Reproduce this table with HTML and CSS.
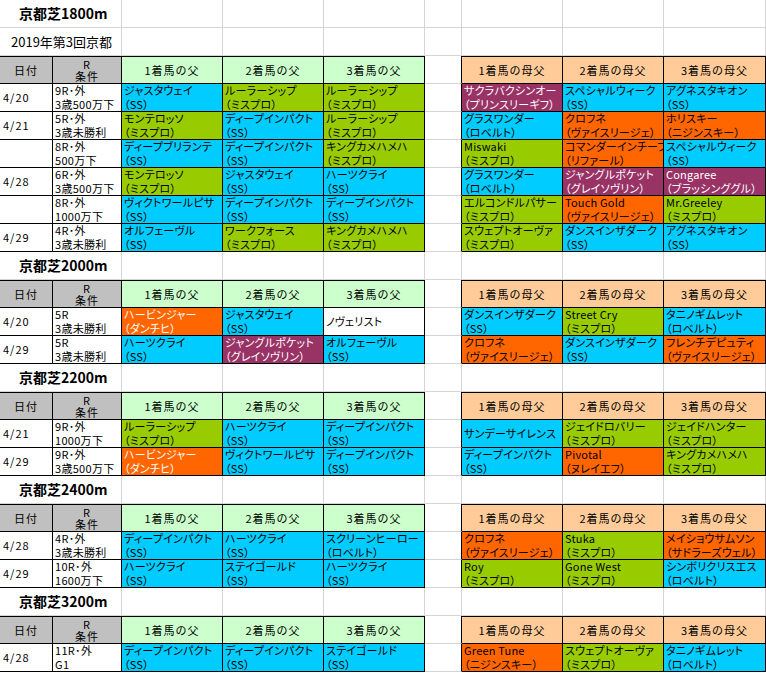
FILE: index.html
```html
<!DOCTYPE html>
<html lang="ja">
<head>
<meta charset="utf-8">
<title>京都芝</title>
<link rel="stylesheet" href="styles.css">
</head>
<body>
<div class="sheet">

  <div class="row"><div class="span2 title">京都芝1800m</div><div></div><div></div><div></div><div></div><div></div><div></div><div></div></div>
  <div class="row"><div class="span2 sub">2019年第3回京都</div><div></div><div></div><div></div><div></div><div></div><div></div><div></div></div>
  <div class="row hd"><div class="h gray mid">日付</div><div class="h gray two">R<br>条件</div><div class="h sire mid">1着馬の父</div><div class="h sire mid">2着馬の父</div><div class="h sire mid">3着馬の父</div><div class="gap"></div><div class="h dam mid">1着馬の母父</div><div class="h dam mid">2着馬の母父</div><div class="h dam mid">3着馬の母父</div></div>
  <div class="row dt"><div class="date">4/20</div><div class="cond">9R･外<br>3歳500万下</div><div class="v blue">ジャスタウェイ<br>（SS）</div><div class="v green">ルーラーシップ<br>（ミスプロ）</div><div class="v green">ルーラーシップ<br>（ミスプロ）</div><div class="gap"></div><div class="v purple">サクラバクシンオー<br>（プリンスリーギフ）</div><div class="v blue">スペシャルウィーク<br>（SS）</div><div class="v blue">アグネスタキオン<br>（SS）</div></div>
  <div class="row dt"><div class="date">4/21</div><div class="cond">5R･外<br>3歳未勝利</div><div class="v green">モンテロッソ<br>（ミスプロ）</div><div class="v blue">ディープインパクト<br>（SS）</div><div class="v green">ルーラーシップ<br>（ミスプロ）</div><div class="gap"></div><div class="v blue">グラスワンダー<br>（ロベルト）</div><div class="v orange">クロフネ<br>（ヴァイスリージェ）</div><div class="v orange">ホリスキー<br>（ニジンスキー）</div></div>
  <div class="row dt"><div class="date"></div><div class="cond">8R･外<br>500万下</div><div class="v blue">ディープブリランテ<br>（SS）</div><div class="v blue">ディープインパクト<br>（SS）</div><div class="v green">キングカメハメハ<br>（ミスプロ）</div><div class="gap"></div><div class="v green">Miswaki<br>（ミスプロ）</div><div class="v orange">コマンダーインチーフ<br>（リファール）</div><div class="v blue">スペシャルウィーク<br>（SS）</div></div>
  <div class="row dt"><div class="date">4/28</div><div class="cond">6R･外<br>3歳500万下</div><div class="v green">モンテロッソ<br>（ミスプロ）</div><div class="v blue">ジャスタウェイ<br>（SS）</div><div class="v blue">ハーツクライ<br>（SS）</div><div class="gap"></div><div class="v blue">グラスワンダー<br>（ロベルト）</div><div class="v purple">ジャングルポケット<br>（グレイソヴリン）</div><div class="v purple">Congaree<br>（ブラッシンググル）</div></div>
  <div class="row dt"><div class="date"></div><div class="cond">8R･外<br>1000万下</div><div class="v blue">ヴィクトワールピサ<br>（SS）</div><div class="v blue">ディープインパクト<br>（SS）</div><div class="v blue">ディープインパクト<br>（SS）</div><div class="gap"></div><div class="v green">エルコンドルパサー<br>（ミスプロ）</div><div class="v orange">Touch Gold<br>（ヴァイスリージェ）</div><div class="v green">Mr.Greeley<br>（ミスプロ）</div></div>
  <div class="row dt"><div class="date">4/29</div><div class="cond">4R･外<br>3歳未勝利</div><div class="v blue">オルフェーヴル<br>（SS）</div><div class="v green">ワークフォース<br>（ミスプロ）</div><div class="v green">キングカメハメハ<br>（ミスプロ）</div><div class="gap"></div><div class="v green">スウェプトオーヴァ<br>（ミスプロ）</div><div class="v blue">ダンスインザダーク<br>（SS）</div><div class="v blue">アグネスタキオン<br>（SS）</div></div>

  <div class="row"><div class="span2 title">京都芝2000m</div><div></div><div></div><div></div><div></div><div></div><div></div><div></div></div>
  <div class="row hd"><div class="h gray mid">日付</div><div class="h gray two">R<br>条件</div><div class="h sire mid">1着馬の父</div><div class="h sire mid">2着馬の父</div><div class="h sire mid">3着馬の父</div><div class="gap"></div><div class="h dam mid">1着馬の母父</div><div class="h dam mid">2着馬の母父</div><div class="h dam mid">3着馬の母父</div></div>
  <div class="row dt"><div class="date">4/20</div><div class="cond">5R<br>3歳未勝利</div><div class="v orange light">ハービンジャー<br>（ダンチヒ）</div><div class="v blue">ジャスタウェイ<br>（SS）</div><div class="v one">ノヴェリスト</div><div class="gap"></div><div class="v blue">ダンスインザダーク<br>（SS）</div><div class="v green">Street Cry<br>（ミスプロ）</div><div class="v blue">タニノギムレット<br>（ロベルト）</div></div>
  <div class="row dt"><div class="date">4/29</div><div class="cond">5R<br>3歳未勝利</div><div class="v blue">ハーツクライ<br>（SS）</div><div class="v purple">ジャングルポケット<br>（グレイソヴリン）</div><div class="v blue">オルフェーヴル<br>（SS）</div><div class="gap"></div><div class="v orange">クロフネ<br>（ヴァイスリージェ）</div><div class="v blue">ダンスインザダーク<br>（SS）</div><div class="v orange">フレンチデピュティ<br>（ヴァイスリージェ）</div></div>

  <div class="row"><div class="span2 title">京都芝2200m</div><div></div><div></div><div></div><div></div><div></div><div></div><div></div></div>
  <div class="row hd"><div class="h gray mid">日付</div><div class="h gray two">R<br>条件</div><div class="h sire mid">1着馬の父</div><div class="h sire mid">2着馬の父</div><div class="h sire mid">3着馬の父</div><div class="gap"></div><div class="h dam mid">1着馬の母父</div><div class="h dam mid">2着馬の母父</div><div class="h dam mid">3着馬の母父</div></div>
  <div class="row dt"><div class="date">4/21</div><div class="cond">9R･外<br>1000万下</div><div class="v green">ルーラーシップ<br>（ミスプロ）</div><div class="v blue">ハーツクライ<br>（SS）</div><div class="v blue">ディープインパクト<br>（SS）</div><div class="gap"></div><div class="v blue one">サンデーサイレンス</div><div class="v green">ジェイドロバリー<br>（ミスプロ）</div><div class="v green">ジェイドハンター<br>（ミスプロ）</div></div>
  <div class="row dt"><div class="date">4/29</div><div class="cond">9R･外<br>3歳500万下</div><div class="v orange light">ハービンジャー<br>（ダンチヒ）</div><div class="v blue">ヴィクトワールピサ<br>（SS）</div><div class="v blue">ディープインパクト<br>（SS）</div><div class="gap"></div><div class="v blue">ディープインパクト<br>（SS）</div><div class="v orange">Pivotal<br>（ヌレイエフ）</div><div class="v green">キングカメハメハ<br>（ミスプロ）</div></div>

  <div class="row"><div class="span2 title">京都芝2400m</div><div></div><div></div><div></div><div></div><div></div><div></div><div></div></div>
  <div class="row hd"><div class="h gray mid">日付</div><div class="h gray two">R<br>条件</div><div class="h sire mid">1着馬の父</div><div class="h sire mid">2着馬の父</div><div class="h sire mid">3着馬の父</div><div class="gap"></div><div class="h dam mid">1着馬の母父</div><div class="h dam mid">2着馬の母父</div><div class="h dam mid">3着馬の母父</div></div>
  <div class="row dt"><div class="date">4/28</div><div class="cond">4R･外<br>3歳未勝利</div><div class="v blue">ディープインパクト<br>（SS）</div><div class="v blue">ハーツクライ<br>（SS）</div><div class="v blue">スクリーンヒーロー<br>（ロベルト）</div><div class="gap"></div><div class="v orange">クロフネ<br>（ヴァイスリージェ）</div><div class="v green">Stuka<br>（ミスプロ）</div><div class="v orange">メイショウサムソン<br>（サドラーズウェル）</div></div>
  <div class="row dt"><div class="date">4/29</div><div class="cond">10R･外<br>1600万下</div><div class="v blue">ハーツクライ<br>（SS）</div><div class="v blue">ステイゴールド<br>（SS）</div><div class="v blue">ハーツクライ<br>（SS）</div><div class="gap"></div><div class="v green">Roy<br>（ミスプロ）</div><div class="v green">Gone West<br>（ミスプロ）</div><div class="v blue">シンボリクリスエス<br>（ロベルト）</div></div>

  <div class="row"><div class="span2 title">京都芝3200m</div><div></div><div></div><div></div><div></div><div></div><div></div><div></div></div>
  <div class="row hd"><div class="h gray mid">日付</div><div class="h gray two">R<br>条件</div><div class="h sire mid">1着馬の父</div><div class="h sire mid">2着馬の父</div><div class="h sire mid">3着馬の父</div><div class="gap"></div><div class="h dam mid">1着馬の母父</div><div class="h dam mid">2着馬の母父</div><div class="h dam mid">3着馬の母父</div></div>
  <div class="row dt"><div class="date">4/28</div><div class="cond">11R･外<br>G1</div><div class="v blue">ディープインパクト<br>（SS）</div><div class="v blue">ディープインパクト<br>（SS）</div><div class="v blue">ステイゴールド<br>（SS）</div><div class="gap"></div><div class="v orange">Green Tune<br>（ニジンスキー）</div><div class="v green">スウェプトオーヴァ<br>（ミスプロ）</div><div class="v blue">タニノギムレット<br>（ロベルト）</div></div>

</div>
</body>
</html>
```

FILE: styles.css
```css
* {
  box-sizing: border-box;
  margin: 0;
  padding: 0;
}

html, body {
  background: #ffffff;
}

body {
  margin: 0;
  width: 766px;
  overflow: hidden;
  font-family: "Noto Sans CJK JP", "Noto Sans", sans-serif;
  font-size: 11px;
  color: #000000;
}

.sheet {
  width: 766px;
}

.row {
  display: grid;
  grid-template-columns: 53px 69px 101px 101px 101px 37px 101px 101px 102px;
  height: 28px;
}

.row > div {
  border-right: 1px solid #d4d4d4;
  border-bottom: 1px solid #d4d4d4;
  overflow: hidden;
  white-space: nowrap;
}

.span2 {
  grid-column: span 2;
}

.title {
  font-size: 14px;
  font-weight: bold;
  padding-left: 19px;
  line-height: 27px;
}

.sub {
  font-size: 13px;
  padding-left: 11px;
  line-height: 27px;
}

/* header row */
.hd > .h {
  border-color: #000000;
  box-shadow: inset 0 1px 0 #000000;
  text-align: center;
  font-size: 11px;
  letter-spacing: 1px;
}

.hd > .gap,
.dt > .gap {
  border-right-color: #000000;
}

.mid {
  line-height: 27px;
  padding-top: 1px;
}

.two {
  line-height: 12px;
  padding-top: 2px;
}

.gray {
  background: #c0c0c0;
}

.sire {
  background: #ccffcc;
}

.dam {
  background: #ffcc99;
}

/* data rows */
.dt > div:not(.gap) {
  border-color: #000000;
}

.date {
  line-height: 27px;
  padding-left: 3px;
  letter-spacing: 1px;
}

.cond {
  line-height: 13.5px;
  padding-left: 2px;
  letter-spacing: 0.3px;
}

.v {
  line-height: 13.5px;
  padding-left: 2px;
  font-feature-settings: "palt";
  letter-spacing: 0.2px;
}

.v.one {
  line-height: 27px;
}

.blue {
  background: #00ccff;
}

.green {
  background: #99cc00;
}

.orange {
  background: #ff6600;
}

.purple {
  background: #993366;
  color: #ffffff;
}

.light {
  color: #ffffff;
}
```
